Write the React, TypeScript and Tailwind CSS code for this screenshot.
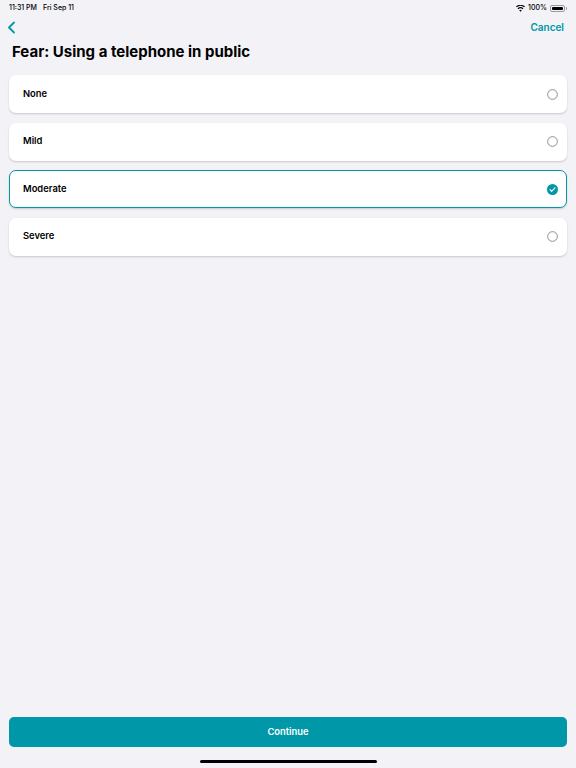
import { useState } from "react";

const options = ["None", "Mild", "Moderate", "Severe"];

function Radio({ checked }: { checked: boolean }) {
  if (checked) {
    return (
      <svg width="11" height="11" viewBox="0 0 20 20" className="shrink-0">
        <circle cx="10" cy="10" r="10" fill="#0097a7" />
        <path d="M5.5 10.3l3 3 6-6.3" fill="none" stroke="#fff" strokeWidth="2" strokeLinecap="round" strokeLinejoin="round" />
      </svg>
    );
  }
  return (
    <svg width="11" height="11" viewBox="0 0 20 20" className="shrink-0">
      <circle cx="10" cy="10" r="8.8" fill="none" stroke="#8e8e93" strokeWidth="1.8" />
    </svg>
  );
}

export default function App() {
  const [selected, setSelected] = useState("Moderate");

  return (
    <div
      className="flex h-[768px] w-[576px] flex-col bg-[#f2f2f7] text-black"
      style={{ fontFamily: "Inter, 'Liberation Sans', sans-serif" }}
    >
      {/* status bar */}
      <div className="flex h-[14px] items-center justify-between px-[9px] pt-[2px] text-[7px] font-medium">
        <div className="flex gap-[6px]">
          <span>11:31 PM</span>
          <span>Fri Sep 11</span>
        </div>
        <div className="flex items-center gap-[3px]">
          <svg width="9" height="7" viewBox="0 0 18 13">
            <path d="M9 13l-2.6-3.1a4 4 0 015.2 0z" fill="#000" />
            <path d="M4.6 7.8a7 7 0 018.8 0l1.5-1.8a9.4 9.4 0 00-11.8 0z" fill="#000" />
            <path d="M1.6 4.2a11.6 11.6 0 0114.8 0L18 2.4a14 14 0 00-18 0z" fill="#000" />
          </svg>
          <span>100%</span>
          <div className="flex items-center">
            <div className="h-[7px] w-[15px] rounded-[2px] border border-[#9a9a9a] p-px">
              <div className="h-full w-full rounded-[1px] bg-black" />
            </div>
            <div className="ml-px h-[3px] w-px rounded-r bg-[#9a9a9a]" />
          </div>
        </div>
      </div>

      {/* nav bar */}
      <div className="flex h-[27px] items-center justify-between pl-[7px] pr-[12px]">
        <svg width="9" height="13" viewBox="0 0 9 13">
          <path d="M7 1.5L2 6.5l5 5" fill="none" stroke="#0097a7" strokeWidth="1.8" strokeLinecap="round" strokeLinejoin="round" />
        </svg>
        <span className="text-[10px] font-semibold text-[#0097a7]">Cancel</span>
      </div>

      <h1 className="px-[12px] pt-[1px] text-[15px] font-bold leading-[20px]">
        Fear: Using a telephone in public
      </h1>

      <div className="mt-[13px] flex flex-col gap-[9.5px] px-[9px]">
        {options.map((o) => {
          const active = o === selected;
          return (
            <button
              key={o}
              onClick={() => setSelected(o)}
              className={
                active
                  ? "flex h-[38px] items-center justify-between rounded-[7px] border border-[#0097a7] bg-white pl-[13px] pr-[8px] shadow-[0_1px_2px_rgba(0,0,0,0.18)]"
                  : "flex h-[38px] items-center justify-between rounded-[7px] border border-transparent bg-white pl-[13px] pr-[8px] shadow-[0_1px_2px_rgba(0,0,0,0.18)]"
              }
            >
              <span className="text-[9.4px] font-semibold">{o}</span>
              <Radio checked={active} />
            </button>
          );
        })}
      </div>

      <div className="flex-1" />

      <div className="px-[9px]">
        <button className="flex h-[30px] w-full items-center justify-center rounded-[5px] bg-[#0098a8] text-[9.4px] font-semibold text-white">
          Continue
        </button>
      </div>

      <div className="flex h-[21px] items-center justify-center pt-[7px]">
        <div className="h-[3px] w-[177px] rounded-full bg-black" />
      </div>
    </div>
  );
}
